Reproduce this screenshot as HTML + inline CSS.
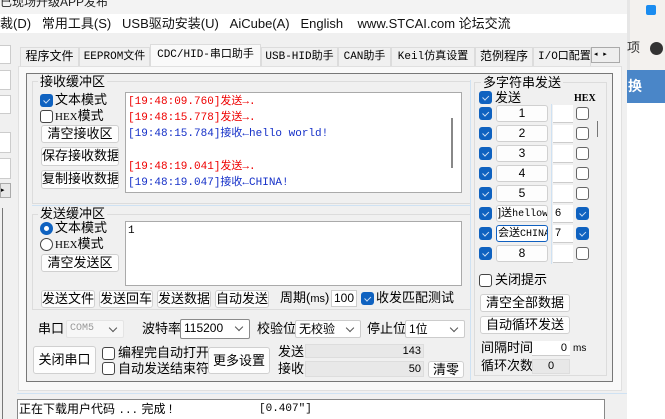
<!DOCTYPE html>
<html><head><meta charset="utf-8"><style>
*{box-sizing:border-box;margin:0;padding:0}
body{width:665px;height:419px;overflow:hidden;position:relative;background:#f0f0f0;font-family:"Liberation Sans","Noto Sans CJK SC",sans-serif;font-size:12px;color:#000}
.a{position:absolute;white-space:nowrap;line-height:16px}
.btn{position:absolute;white-space:nowrap;overflow:hidden;background:#fdfdfd;border:1px solid #d0d0d0;border-radius:3px;text-align:center;font-size:12px;line-height:15px}
.cb{position:absolute;width:13px;height:13px;border-radius:3px;background:#0f62c0;}
.cb:after{content:"";position:absolute;left:3px;top:2px;width:5px;height:3px;border-left:1px solid #cfe0f5;border-bottom:1px solid #cfe0f5;transform:rotate(-45deg) translate(-1px,2px)}
.ub{position:absolute;width:13px;height:13px;border-radius:3px;border:1px solid #444;background:#fff}
.grp{position:absolute;border:1px solid #dcdcdc}
.white{position:absolute;background:#fff;white-space:nowrap;overflow:hidden}
.combo{position:absolute;white-space:nowrap;background:#fff;border:1px solid #8a8a8a;border-radius:2px;font-size:12px;line-height:16px;padding-left:3px}
.combo:after{content:"";position:absolute;right:7px;top:4px;width:5px;height:5px;border-right:1px solid #555;border-bottom:1px solid #555;transform:rotate(45deg)}
.mono{font-family:"Liberation Mono","Noto Sans CJK SC",monospace}
.tab{position:absolute;top:47px;height:20px;white-space:nowrap;overflow:hidden;background:#f0f0f0;border:1px solid #dcdcdc;font-family:"Liberation Mono","Noto Sans CJK SC",monospace;font-size:11px;line-height:18px;text-align:center}
.l{font-size:12px}
</style></head><body>
<div class="a" style="left:0;top:0;width:627px;height:14px;background:#f3f3f3"></div>
<div class="a" style="left:0;top:-6px;font-size:12px;color:#222">已现场升级APP发布</div>
<div class="a" style="left:0;top:14px;width:627px;height:19px;background:#fff"></div>
<div class="a" style="left:0;top:16px;font-size:13px;color:#111">裁(D)&nbsp;&nbsp;&nbsp;常用工具(S)&nbsp;&nbsp;&nbsp;USB驱动安装(U)&nbsp;&nbsp;&nbsp;AiCube(A)&nbsp;&nbsp;&nbsp;English&nbsp;&nbsp;&nbsp;&nbsp;www.STCAI.com 论坛交流</div>
<!-- right app -->
<div class="a" style="left:627px;top:0;width:38px;height:419px;background:#f3f1ee"></div>
<div class="a" style="left:627px;top:0;width:3px;height:419px;background:#e6e6e6"></div>
<div class="a" style="left:646px;top:5px;width:10px;height:10px;border-radius:2px;background:#1a8cf0"></div>
<div class="a" style="left:627px;top:40px;font-size:13px;color:#333">项</div>
<div class="a" style="left:650px;top:42px;width:13px;height:13px;border-radius:50%;background:#333"></div>
<div class="a" style="left:627px;top:70px;width:38px;height:33px;background:#4a86c8;color:#fff;font-size:14px;font-weight:bold;line-height:33px;padding-left:1px">换</div>
<div class="a" style="left:627px;top:103px;width:38px;height:316px;background:#fff"></div>
<!-- left strip -->
<div class="a" style="left:0;top:45px;width:11px;height:19px;background:#fff;border:1px solid #ccc;border-left:none"></div>
<div class="a" style="left:0;top:70px;width:11px;height:20px;background:#fff;border:1px solid #ccc;border-left:none"></div>
<div class="a" style="left:0;top:95px;width:11px;height:19px;background:#fff;border:1px solid #ccc;border-left:none"></div>
<div class="a" style="left:0;top:132px;width:11px;height:21px;background:#fff;border:1px solid #ccc;border-left:none"></div>
<div class="a" style="left:0;top:158px;width:11px;height:21px;background:#fff;border:1px solid #ccc;border-left:none"></div>
<div class="a" style="left:0;top:183px;width:11px;height:15px;background:#e8e8e8;border:1px solid #aaa;font-size:7px;line-height:13px">▸</div>
<div class="a" style="left:0;top:208px;width:3px;height:211px;border-right:1px solid #777"></div>
<!-- tabs -->
<div class="tab" style="left:20px;width:59px;font-size:12px">程序文件</div>
<div class="tab" style="left:79px;width:71px">EEPROM文件</div>
<div class="tab" style="left:150px;top:44px;height:23px;width:111px;background:#f9f9f9;border-bottom:none;line-height:21px">CDC/HID-串口助手</div>
<div class="tab" style="left:261px;width:77px">USB-HID助手</div>
<div class="tab" style="left:338px;width:53px">CAN助手</div>
<div class="tab" style="left:391px;width:84px">Keil仿真设置</div>
<div class="tab" style="left:475px;width:58px;font-size:12px">范例程序</div>
<div class="tab" style="left:533px;width:58px;text-align:left;padding-left:4px">I/O口配置</div>
<div class="a" style="left:591px;top:47px;width:29px;height:16px;border:1px solid #aaa;background:#eee;font-size:7px;line-height:14px">&nbsp;◂&nbsp;&nbsp;&nbsp;▸</div>
<div class="a" style="left:18px;top:66px;width:604px;height:325px;background:#f9f9f9;border:1px solid #e0e0e0"></div>
<div class="a" style="left:26px;top:73px;width:587px;height:309px;border:1px solid #777;background:#f0f0f0"></div>
<!-- receive group -->
<div class="grp" style="left:32px;top:81px;width:439px;height:123px"></div>
<div class="a" style="left:38px;top:74px;background:#f0f0f0;padding:0 2px;font-size:13px">接收缓冲区</div>
<div class="cb" style="left:40px;top:94px"></div><div class="a" style="left:55px;top:92px;font-size:13px">文本模式</div>
<div class="ub" style="left:40px;top:110px"></div><div class="a" style="left:55px;top:108px;font-size:13px"><span style="font-family:'Liberation Serif';font-size:11px">HEX</span>模式</div>
<div class="btn" style="left:41px;top:125px;width:78px;height:18px;font-size:13px">清空接收区</div>
<div class="btn" style="left:41px;top:147px;width:78px;height:19px;font-size:13px">保存接收数据</div>
<div class="btn" style="left:41px;top:170px;width:78px;height:19px;font-size:13px">复制接收数据</div>
<div class="white" style="left:125px;top:92px;width:337px;height:101px;border:1px solid #aaa"></div>
<div class="a" style="left:451px;top:118px;width:2px;height:50px;background:#888"></div>
<div class="a mono" style="left:128px;top:94px;font-size:11px;line-height:16.2px">
<div style="color:#e00">[19:48:09.760]发送→.</div>
<div style="color:#e00">[19:48:15.778]发送→.</div>
<div style="color:#1530c8">[19:48:15.784]接收←hello world!</div>
<div>&nbsp;</div>
<div style="color:#e00">[19:48:19.041]发送→.</div>
<div style="color:#1530c8">[19:48:19.047]接收←CHINA!</div>
</div>
<div class="a" style="left:32px;top:205px;width:439px;height:1px;background:#cfe2f3"></div>
<!-- send group -->
<div class="grp" style="left:32px;top:214px;width:439px;height:96px"></div>
<div class="a" style="left:38px;top:206px;background:#f0f0f0;padding:0 2px;font-size:13px">发送缓冲区</div>
<div class="a" style="left:40px;top:222px;width:13px;height:13px;border-radius:50%;border:4px solid #0f62c0;background:#fff"></div>
<div class="a" style="left:55px;top:220px;font-size:13px">文本模式</div>
<div class="a" style="left:40px;top:238px;width:13px;height:13px;border-radius:50%;border:1px solid #444;background:#fff"></div>
<div class="a" style="left:55px;top:236px;font-size:13px"><span style="font-family:'Liberation Serif';font-size:11px">HEX</span>模式</div>
<div class="btn" style="left:41px;top:254px;width:78px;height:18px;font-size:13px">清空发送区</div>
<div class="white" style="left:125px;top:221px;width:337px;height:65px;border:1px solid #aaa"></div>
<div class="a mono" style="left:128px;top:223px;font-size:11px">1</div>
<div class="btn" style="left:41px;top:290px;width:54px;height:18px;font-size:13px">发送文件</div>
<div class="btn" style="left:99px;top:290px;width:54px;height:18px;font-size:13px">发送回车</div>
<div class="btn" style="left:157px;top:290px;width:54px;height:18px;font-size:13px">发送数据</div>
<div class="btn" style="left:215px;top:290px;width:54px;height:18px;font-size:13px">自动发送</div>
<div class="a" style="left:280px;top:290px;font-size:13px">周期(<span style="font-size:11px">ms</span>)</div>
<div class="white" style="left:331px;top:290px;width:26px;height:17px;border:1px solid #ccc;font-size:12px;text-align:right;padding-right:2px;line-height:15px">100</div>
<div class="cb" style="left:361px;top:292px"></div><div class="a" style="left:376px;top:290px;font-size:13px">收发匹配测试</div>
<!-- serial -->
<div class="a" style="left:38px;top:321px;font-size:13px">串口</div>
<div class="combo" style="left:66px;top:320px;width:58px;height:18px;border-color:#e4e4e4;color:#999;background:#f7f7f7;font-family:'Liberation Mono';font-size:10px">COM5</div>
<div class="a" style="left:142px;top:321px;font-size:13px">波特率</div>
<div class="combo" style="left:180px;top:319px;width:70px;height:20px">115200</div>
<div class="a" style="left:257px;top:321px;font-size:13px">校验位</div>
<div class="combo" style="left:295px;top:320px;width:66px;height:18px;border-color:#ccc">无校验</div>
<div class="a" style="left:367px;top:321px;font-size:13px">停止位</div>
<div class="combo" style="left:405px;top:320px;width:60px;height:18px;border-color:#ccc">1位</div>
<div class="btn" style="left:33px;top:346px;width:63px;height:28px;line-height:26px;font-size:13px">关闭串口</div>
<div class="ub" style="left:102px;top:347px"></div><div class="a" style="left:118px;top:345px;font-size:13px">编程完自动打开</div>
<div class="ub" style="left:102px;top:362px"></div><div class="a" style="left:118px;top:361px;font-size:13px">自动发送结束符</div>
<div class="btn" style="left:208px;top:347px;width:62px;height:27px;line-height:25px;font-size:13px">更多设置</div>
<div class="a" style="left:278px;top:344px;font-size:13px">发送</div>
<div class="a" style="left:278px;top:361px;font-size:13px">接收</div>
<div class="a" style="left:305px;top:344px;width:119px;height:14px;background:#e8e8e8;border:1px solid #ddd;text-align:right;padding-right:2px;font-size:11px;line-height:12px">143</div>
<div class="a" style="left:305px;top:361px;width:119px;height:16px;background:#e8e8e8;border:1px solid #ddd;text-align:right;padding-right:2px;font-size:11px;line-height:14px">50</div>
<div class="btn" style="left:428px;top:361px;width:36px;height:17px;font-size:13px">清零</div>
<!-- multi string -->
<div class="grp" style="left:474px;top:82px;width:133px;height:294px"></div>
<div class="a" style="left:470px;top:80px;width:1px;height:300px;background:#cfe2f3"></div>
<div class="a" style="left:481px;top:75px;background:#f0f0f0;padding:0 2px;font-size:13px">多字符串发送</div>
<div class="cb" style="left:479px;top:91px"></div><div class="a" style="left:495px;top:90px;font-size:13px">发送</div>
<div class="a" style="left:574px;top:91px;font-family:'Liberation Serif';font-size:10px;font-weight:bold">HEX</div>
<div class="a" style="left:551px;top:104px;width:1px;height:160px;background:#cfe2f3"></div>
<div class="a" style="left:597px;top:121px;width:1px;height:16px;background:#777"></div>
<div class="cb" style="left:479px;top:107px"></div><div class="btn" style="left:496px;top:105px;width:52px;height:17px">1</div><div class="white" style="left:553px;top:105px;width:20px;height:18px;border-bottom:1px solid #ccc"></div><div class="ub" style="left:576px;top:107px;border-color:#666"></div>
<div class="cb" style="left:479px;top:127px"></div><div class="btn" style="left:496px;top:125px;width:52px;height:17px">2</div><div class="white" style="left:553px;top:125px;width:20px;height:18px;border-bottom:1px solid #ccc"></div><div class="ub" style="left:576px;top:127px;border-color:#666"></div>
<div class="cb" style="left:479px;top:147px"></div><div class="btn" style="left:496px;top:145px;width:52px;height:17px">3</div><div class="white" style="left:553px;top:145px;width:20px;height:18px;border-bottom:1px solid #ccc"></div><div class="ub" style="left:576px;top:147px;border-color:#666"></div>
<div class="cb" style="left:479px;top:167px"></div><div class="btn" style="left:496px;top:165px;width:52px;height:17px">4</div><div class="white" style="left:553px;top:165px;width:20px;height:18px;border-bottom:1px solid #ccc"></div><div class="ub" style="left:576px;top:167px;border-color:#666"></div>
<div class="cb" style="left:479px;top:187px"></div><div class="btn" style="left:496px;top:185px;width:52px;height:17px">5</div><div class="white" style="left:553px;top:185px;width:20px;height:18px;border-bottom:1px solid #ccc"></div><div class="ub" style="left:576px;top:187px;border-color:#666"></div>
<div class="cb" style="left:479px;top:207px"></div><div class="btn" style="left:496px;top:205px;width:52px;height:17px;font-size:11px;text-align:left;padding-left:1px">]送<span class="mono" style="font-size:10px">hellow</span></div><div class="white" style="left:553px;top:205px;width:20px;height:18px;border-bottom:1px solid #ccc;font-size:11px;padding-left:2px;line-height:16px">6</div><div class="cb" style="left:576px;top:207px"></div>
<div class="cb" style="left:479px;top:227px"></div><div class="btn" style="left:496px;top:225px;width:52px;height:17px;font-size:11px;text-align:left;padding-left:1px;border-color:#1060c0;background:#fff">会送<span class="mono" style="font-size:10px">CHINA</span></div><div class="white" style="left:553px;top:225px;width:20px;height:18px;border-bottom:1px solid #ccc;font-size:11px;padding-left:2px;line-height:16px">7</div><div class="cb" style="left:576px;top:227px"></div>
<div class="cb" style="left:479px;top:247px"></div><div class="btn" style="left:496px;top:245px;width:52px;height:17px">8</div><div class="white" style="left:553px;top:245px;width:20px;height:18px;border-bottom:1px solid #ccc"></div><div class="ub" style="left:576px;top:247px;border-color:#666"></div>
<div class="ub" style="left:479px;top:274px"></div><div class="a" style="left:495px;top:272px;font-size:13px">关闭提示</div>
<div class="btn" style="left:480px;top:294px;width:90px;height:18px;font-size:13px">清空全部数据</div>
<div class="btn" style="left:480px;top:316px;width:90px;height:18px;font-size:13px">自动循环发送</div>
<div class="a" style="left:481px;top:340px;font-size:13px">间隔时间</div>
<div class="white" style="left:532px;top:341px;width:38px;height:15px;border-bottom:1px solid #ccc;text-align:right;padding-right:3px;font-size:11px;line-height:14px">0</div>
<div class="a" style="left:573px;top:341px;font-size:10px" >ms</div>
<div class="a" style="left:481px;top:358px;font-size:13px">循环次数</div>
<div class="a" style="left:532px;top:359px;width:38px;height:15px;background:#e8e8e8;border:1px solid #ddd;text-align:center;font-size:11px;line-height:13px">0</div>
<!-- bottom -->
<div class="a" style="left:17px;top:393px;width:610px;height:1px;background:#cfe2f3"></div>
<div class="white" style="left:17px;top:399px;width:588px;height:20px;border:1px solid #888;border-bottom:none"></div>
<div class="a" style="left:19px;top:401px;font-size:12px">正在下载用户代码 <span class="mono" style="font-size:11px">...</span> 完成 !</div>
<div class="a mono" style="left:259px;top:401px;font-size:11px">[0.407"]</div>
</body></html>
